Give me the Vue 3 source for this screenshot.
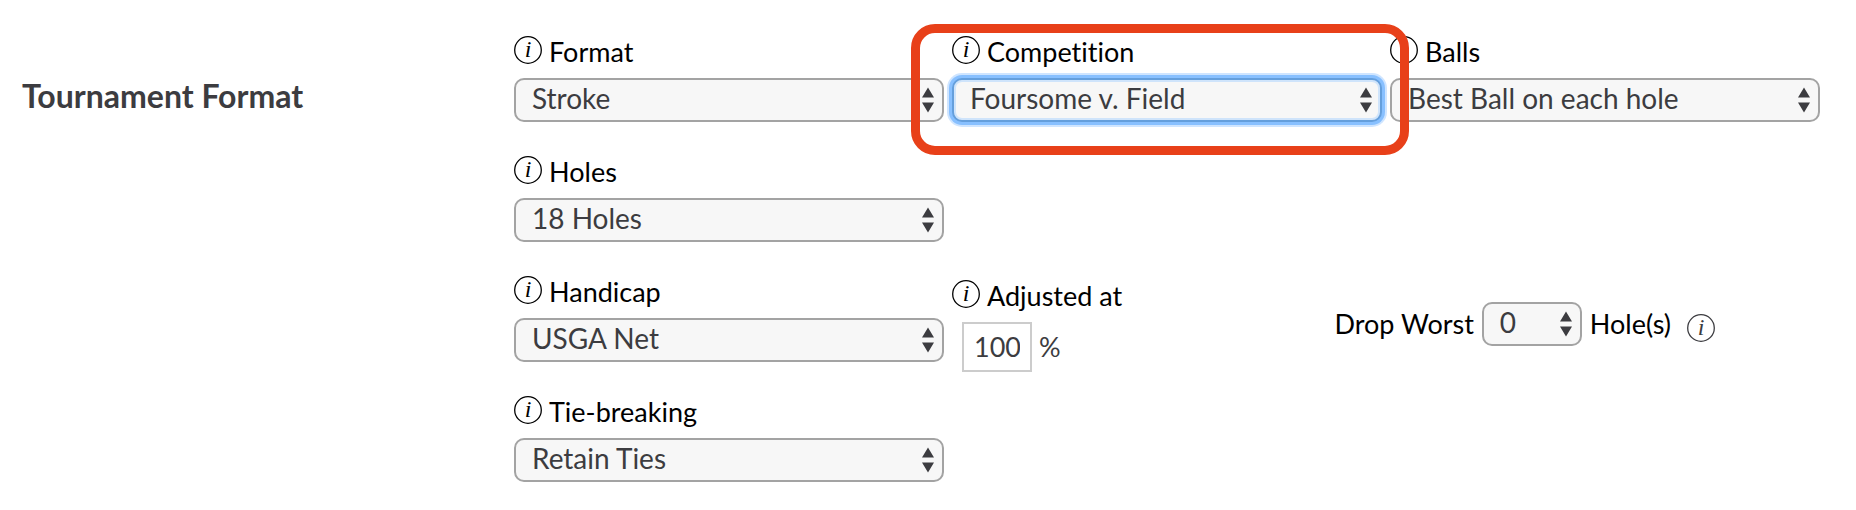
<script setup>
import { h, reactive } from 'vue'

const form = reactive({
  format: 'Stroke',
  competition: 'Foursome v. Field',
  balls: 'Best Ball on each hole',
  holes: '18 Holes',
  handicap: 'USGA Net',
  ties: 'Retain Ties',
  adjusted: '100',
  drop: '0',
})

const fields = [
  { key: 'format', label: 'Format', area: 'format' },
  { key: 'competition', label: 'Competition', area: 'competition', active: true },
  { key: 'balls', label: 'Balls', area: 'balls' },
  { key: 'holes', label: 'Holes', area: 'holes' },
  { key: 'handicap', label: 'Handicap', area: 'handicap' },
  { key: 'ties', label: 'Tie-breaking', area: 'ties' },
]

const InfoIcon = () =>
  h('svg', { viewBox: '0 0 28 28', width: 28, height: 28, 'aria-hidden': 'true' }, [
    h('circle', { cx: 14, cy: 14, r: 13.3, fill: 'none', stroke: 'currentColor', 'stroke-width': 1.3 }),
    h(
      'text',
      {
        x: 14,
        y: 21,
        'text-anchor': 'middle',
        fill: 'currentColor',
        'font-family': '"Liberation Serif", serif',
        'font-style': 'italic',
        'font-size': 24,
      },
      'i',
    ),
  ])

const Arrows = () =>
  h('svg', { viewBox: '0 0 12 26', width: 12, height: 26, 'aria-hidden': 'true' }, [
    h('path', { d: 'M6 0.5 12 10.5H0ZM0 15.5H12L6 25.5Z', fill: 'currentColor' }),
  ])
</script>

<template>
  <form class="page" @submit.prevent>
    <h2 class="title">Tournament Format</h2>

    <div v-for="f in fields" :key="f.key" class="field" :class="f.area">
      <label class="label" :for="f.key"><InfoIcon /><span>{{ f.label }}</span></label>
      <div class="select-box">
        <select :id="f.key" v-model="form[f.key]" :class="{ active: f.active }">
          <option>{{ form[f.key] }}</option>
        </select>
        <span class="arrows"><Arrows /></span>
      </div>
      <div v-if="f.active" class="highlight"></div>
    </div>

    <div class="extras">
      <div class="adjusted">
        <label class="label" for="adjusted"><InfoIcon /><span>Adjusted at</span></label>
        <div class="percent">
          <input id="adjusted" v-model="form.adjusted" type="text" />
          <span>%</span>
        </div>
      </div>
      <div class="drop">
        <label for="drop">Drop Worst</label>
        <div class="select-box small">
          <select id="drop" v-model="form.drop">
            <option>0</option>
          </select>
          <span class="arrows"><Arrows /></span>
        </div>
        <span>Hole(s)</span>
        <span class="hint"><InfoIcon /></span>
      </div>
    </div>
  </form>
</template>

<style>
body {
  margin: 0;
  background: #fff;
}
</style>

<style scoped>
.page {
  display: grid;
  grid-template-columns: 484px repeat(3, minmax(0, 1fr));
  grid-template-areas:
    'title format competition balls'
    '. holes . .'
    '. handicap extras extras'
    '. ties . .';
  gap: 34px 8px;
  padding: 36px 36px 28px 22px;
  font-family: Lato, 'Open Sans', sans-serif;
  font-size: 27px;
  line-height: 32px;
  font-variant-ligatures: none;
  color: #000;
}
.title {
  grid-area: title;
  margin: 42px 0 0;
  font-size: 32px;
  line-height: 36px;
  font-weight: 700;
  color: #3c3c40;
}
.field {
  position: relative;
}
.format { grid-area: format; }
.competition { grid-area: competition; z-index: 1; }
.balls { grid-area: balls; }
.holes { grid-area: holes; }
.handicap { grid-area: handicap; }
.ties { grid-area: ties; }
.label {
  display: flex;
  height: 42px;
  gap: 7px;
}
svg {
  display: block;
  flex: none;
}
.select-box {
  position: relative;
}
select {
  display: block;
  box-sizing: border-box;
  width: 100%;
  height: 44px;
  margin: 0;
  padding: 0 32px 4px 16px;
  border: 2px solid #a3a3a3;
  border-radius: 10px;
  background: #f7f7f7;
  color: #3c3c40;
  font: inherit;
  font-size: 28px;
  font-variant-ligatures: none;
  appearance: none;
  outline: none;
}
select.active {
  border-color: #659fdc;
  box-shadow:
    inset 0 0 0 2px #cfe4fb,
    0 0 0 3px #88c0ff,
    0 0 0 5px #cfe5ff;
}
.arrows {
  position: absolute;
  top: 9px;
  right: 10px;
  color: #3c3c40;
  pointer-events: none;
}
.highlight {
  position: absolute;
  inset: -12px -27px -33px -41px;
  border: 9px solid #e84019;
  border-radius: 24px;
  pointer-events: none;
}
.extras {
  grid-area: extras;
  display: flex;
  justify-content: space-between;
  align-items: flex-start;
  height: 86px;
  padding-right: 105px;
}
.adjusted {
  padding-top: 4px;
}
.percent {
  display: flex;
  align-items: center;
  gap: 7px;
  padding-left: 10px;
  color: #3c3c40;
}
input {
  box-sizing: border-box;
  width: 70px;
  height: 50px;
  padding: 0 10px 2px;
  border: 2px solid #ccc;
  background: #fff;
  color: #3c3c40;
  font: inherit;
}
.drop {
  display: flex;
  align-items: center;
  gap: 8px;
  padding-top: 26px;
}
.small {
  width: 100px;
}
.hint {
  padding: 8px 0 0 8px;
  color: #3c3c40;
}
</style>
